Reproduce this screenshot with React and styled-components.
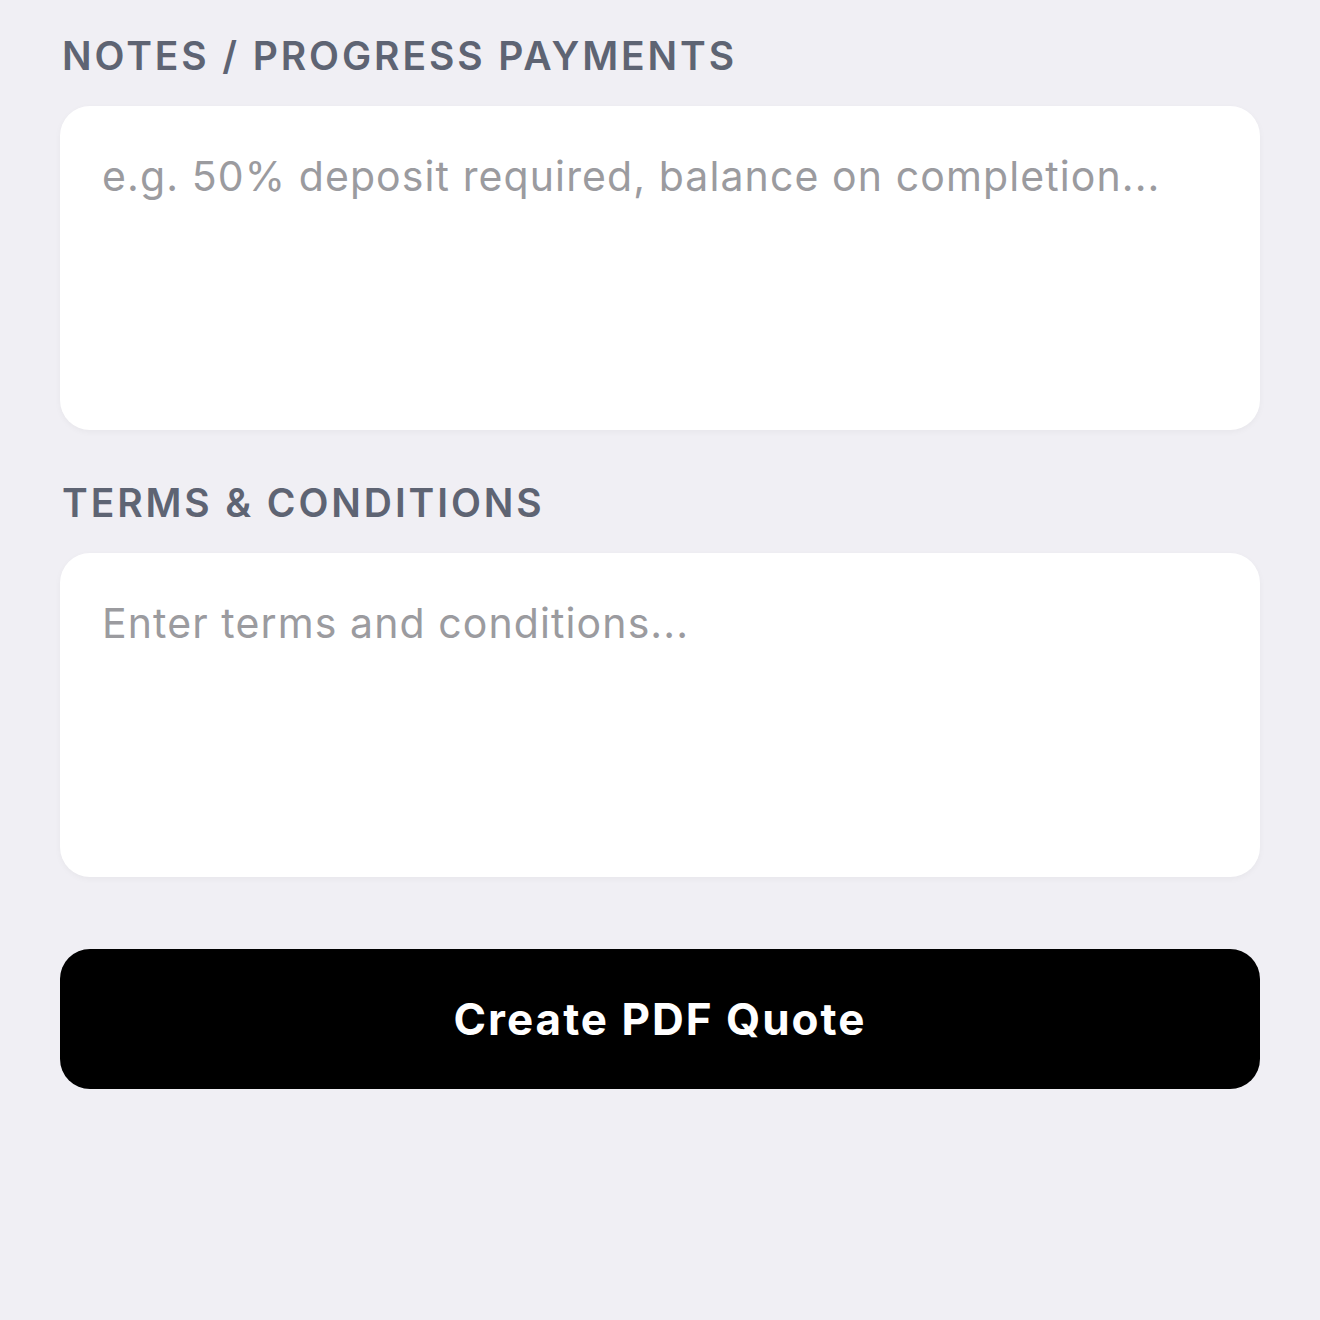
import React from "react";
import styled, { createGlobalStyle } from "styled-components";

const Global = createGlobalStyle`
  html, body { margin: 0; padding: 0; background: #f0eff4; }
  body { font-family: Inter, "Noto Sans", sans-serif; -webkit-font-smoothing: antialiased; }
`;

const Page = styled.div`
  min-height: 1320px;
  box-sizing: border-box;
  padding: 32px 60px 0;
  display: flex;
  flex-direction: column;
`;

const Section = styled.section`
  display: flex;
  flex-direction: column;
  gap: 26px;
  margin-bottom: ${(p) => p.$mb || 0}px;
`;

const Label = styled.label`
  padding-left: 2px;
  font-size: 39px;
  line-height: 48px;
  font-weight: 600;
  letter-spacing: 2.9px;
  text-transform: uppercase;
  color: #5e6473;
`;

const Area = styled.textarea`
  display: block;
  box-sizing: border-box;
  width: 100%;
  height: 324px;
  resize: none;
  border: none;
  outline: none;
  border-radius: 30px;
  background: #ffffff;
  box-shadow: 0 2px 6px rgba(0, 0, 0, 0.04);
  padding: 44px 42px;
  font-family: Inter, "Noto Sans", sans-serif;
  font-size: 41px;
  line-height: 52px;
  letter-spacing: 1.1px;
  color: #1c1c1e;
  &::placeholder { color: #9b9b9f; }
`;

const Button = styled.button`
  height: 140px;
  width: 100%;
  border: none;
  border-radius: 30px;
  background: #000;
  color: #fff;
  font-family: Inter, "Noto Sans", sans-serif;
  font-size: 44px;
  font-weight: 700;
  letter-spacing: 2px;
  cursor: pointer;
`;

export default function App() {
  return (
    <>
      <Global />
      <Page>
        <Section $mb={49}>
          <Label htmlFor="notes">Notes / Progress Payments</Label>
          <Area id="notes" placeholder="e.g. 50% deposit required, balance on completion..." />
        </Section>
        <Section $mb={72}>
          <Label htmlFor="terms">Terms &amp; Conditions</Label>
          <Area id="terms" placeholder="Enter terms and conditions..." />
        </Section>
        <Button>Create PDF Quote</Button>
      </Page>
    </>
  );
}
